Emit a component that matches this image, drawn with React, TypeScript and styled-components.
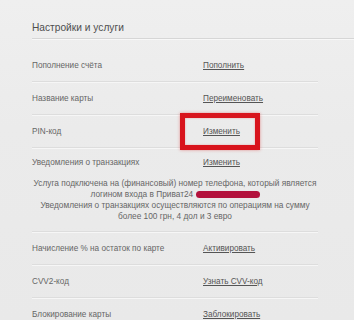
import styled, { createGlobalStyle } from 'styled-components';

const GlobalStyle = createGlobalStyle`
  html, body {
    margin: 0;
    padding: 0;
    background: #ebebeb;
  }
  body {
    font-family: "Liberation Sans", Arial, sans-serif;
    overflow: hidden;
  }
`;

const rows = [
  { label: 'Пополнение счёта', action: 'Пополнить' },
  { label: 'Название карты', action: 'Переименовать' },
  { label: 'PIN-код', action: 'Изменить', marked: true },
];

const rowsAfter = [
  { label: 'Начисление % на остаток по карте', action: 'Активировать' },
  { label: 'CVV2-код', action: 'Узнать CVV-код' },
  { label: 'Блокирование карты', action: 'Заблокировать' },
];

const App = () => {
  return (
    <Page>
      <GlobalStyle />
      <Heading>Настройки и услуги</Heading>
      {rows.map((r) => (
        <Row key={r.label}>
          <Label>{r.label}</Label>
          <Action href="#">{r.action}</Action>
          {r.marked && <Highlight />}
        </Row>
      ))}
      <Row $plain>
        <Label>Уведомления о транзакциях</Label>
        <Action href="#">Изменить</Action>
      </Row>
      <Notice>
        Услуга подключена на (финансовый) номер телефона, который является
        <br />
        логином входа в Приват24 <Redacted />
        <br />
        Уведомления о транзакциях осуществляются по операциям на сумму
        <br />
        более 100 грн, 4 дол и 3 евро
      </Notice>
      {rowsAfter.map((r) => (
        <Row key={r.label}>
          <Label>{r.label}</Label>
          <Action href="#">{r.action}</Action>
        </Row>
      ))}
    </Page>
  );
};

export default App;

const Page = styled.div`
  width: 354px;
  height: 320px;
  box-sizing: border-box;
  padding: 20px 36px 0 32px;
  background: linear-gradient(180deg, #efefef 0%, #ebebeb 40%, #e9e9e9 100%);
  overflow: hidden;
`;

const Heading = styled.div`
  font-size: 10.2px;
  color: #4e4e4e;
  line-height: 16px;
  padding-bottom: 2px;
  margin-right: -36px;
  border-bottom: 1px solid #d6d6d6;
  box-shadow: 0 1px 0 #f8f8f8;
  margin-bottom: 10px;
`;

const Row = styled.div<{ $plain?: boolean }>`
  position: relative;
  display: grid;
  grid-template-columns: 171px 1fr;
  align-items: center;
  height: ${(p) => (p.$plain ? '29px' : '33px')};
  box-sizing: border-box;
  border-bottom: ${(p) => (p.$plain ? 'none' : '1px solid #dddddd')};
  box-shadow: ${(p) => (p.$plain ? 'none' : '0 1px 0 #f6f6f6')};
  font-size: 8.2px;
  color: #666;
`;

const Label = styled.span`
  color: #666;
`;

const Action = styled.a`
  color: #555;
  text-decoration: underline;
`;

const Highlight = styled.div`
  position: absolute;
  left: 148px;
  top: -2px;
  width: 80px;
  height: 37px;
  box-sizing: border-box;
  border: 5px solid #d8141c;
  box-shadow: 0 0 3px rgba(220, 40, 40, 0.45), inset 0 0 2px rgba(220, 40, 40, 0.4);
  pointer-events: none;
`;

const Notice = styled.div`
  text-align: center;
  white-space: nowrap;
  font-size: 8.3px;
  line-height: 11px;
  color: #666;
  padding: 1px 0 9px;
  border-bottom: 1px solid #dddddd;
  box-shadow: 0 1px 0 #f6f6f6;
`;

const Redacted = styled.span`
  display: inline-block;
  width: 64px;
  height: 7px;
  border-radius: 4px;
  background: #b3123d;
  vertical-align: middle;
`;
